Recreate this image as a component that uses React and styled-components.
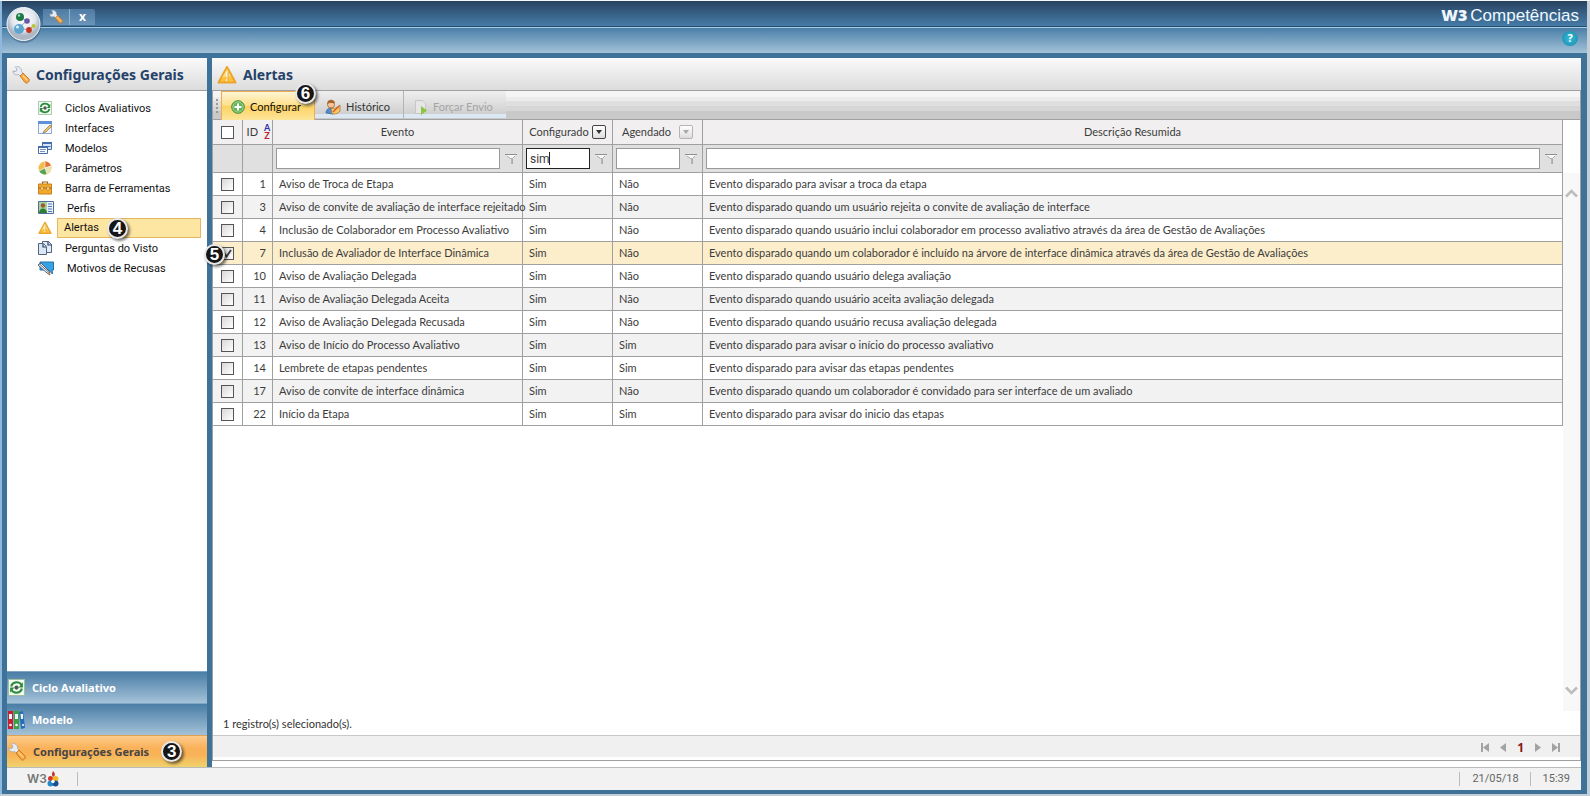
import React, { useState } from 'react';
import styled, { createGlobalStyle, css, ThemeProvider } from 'styled-components';

const theme = {
    font: {
        family: `Roboto, 'DejaVu Sans Condensed', sans-serif`,
        grid: `Lato, Roboto, sans-serif`,
        bold: `'Noto Sans', 'DejaVu Sans Condensed', sans-serif`,
        brand: `'Liberation Sans', Arial, sans-serif`
    },
    colors: {
        frame: '#3f7299',
        line: '#a0a0a0',
        title: '#24426a',
        text: '#4c4c4c'
    }
};

const GlobalStyle = createGlobalStyle`
    * {
        box-sizing: border-box;
    }

    body {
        margin: 0;
        background: #c3ced6;
        font-family: ${theme.font.family};
        font-size: 11px;
        line-height: 14px;
        color: ${theme.colors.text};
    }

    button,
    input {
        font: inherit;
        color: inherit;
        margin: 0;
        padding: 0;
    }

    svg {
        display: block;
        flex: none;
    }
`;

const Shell = styled.div`
    min-height: 100vh;
    display: flex;
    flex-direction: column;
    padding: 0 3px 2px 0;
    border-top: 1px solid #f4fafc;
`;

const Frame = styled.div`
    flex: 1;
    display: flex;
    flex-direction: column;
    background: ${({ theme }) => theme.colors.frame};
    border-left: 2px solid #8fb9dc;
`;

const TopBar = styled.header`
    position: relative;
    height: 26px;
    display: flex;
    justify-content: space-between;
    align-items: center;
    padding: 0 8px 0 41px;
    background: linear-gradient(#28425f, #3a668c 60%, #457aa5);
    border-bottom: 1px solid #24506f;
`;

const SubBar = styled.div`
    height: 26px;
    display: flex;
    justify-content: flex-end;
    align-items: center;
    padding: 0 9px;
    background: linear-gradient(#4a7fa8, #a3c2d8);
    border-top: 1px solid #a9cbe2;
`;

const Orb = styled.button`
    position: absolute;
    left: 4px;
    top: 5px;
    z-index: 2;
    border: 0;
    background: none;
`;

const Tab = styled.div`
    display: flex;
    align-items: center;
    height: 16px;
    margin-top: 6px;
    background: linear-gradient(#4f7ba3, #6b95ba);
    border-radius: 0 3px 0 0;
`;

const TabButton = styled.button`
    width: 26px;
    height: 16px;
    display: flex;
    align-items: center;
    justify-content: center;
    border: 0;
    background: none;
    color: #fff;
    font-family: ${({ theme }) => theme.font.bold};
    font-size: 12px;
    font-weight: bold;

    & + & {
        border-left: 1px solid #8fb2cf;
    }
`;

const Brand = styled.div`
    display: flex;
    align-items: baseline;
    gap: 3px;
    margin-top: 4px;
    font-family: ${({ theme }) => theme.font.brand};
    font-size: 17px;
    line-height: 20px;
    color: #f0f8ff;

    b {
        font-family: 'Open Sans', sans-serif;
        font-size: 16px;
        font-weight: 800;
    }
`;

const HelpButton = styled.button`
    width: 16px;
    height: 15px;
    margin-bottom: 5px;
    border: 0;
    border-radius: 50%;
    background: radial-gradient(#39bcd6, #1688ac);
    color: #fff;
    font-family: ${({ theme }) => theme.font.bold};
    font-weight: bold;
    line-height: 14px;
`;

const Body = styled.div`
    flex: 1;
    display: flex;
    gap: 5px;
    padding: 5px 6px 0 5px;
`;

const Sidebar = styled.aside`
    width: 200px;
    flex: none;
    display: flex;
    flex-direction: column;
    background: #fff;
`;

const PanelTitle = styled.h1`
    height: 33px;
    margin: 0;
    padding: 2px 5px 0;
    display: flex;
    align-items: center;
    gap: 6px;
    font-family: ${({ theme }) => theme.font.bold};
    font-size: 14px;
    line-height: 20px;
    color: ${({ theme }) => theme.colors.title};
    background: linear-gradient(#fafafa, #dcdcdc);
    border-bottom: 1px solid ${({ theme }) => theme.colors.line};
`;

const Menu = styled.nav`
    flex: 1;
    display: flex;
    flex-direction: column;
    padding: 7px 6px 0 31px;
`;

const MenuLink = styled.a`
    height: 20px;
    display: flex;
    align-items: center;
    gap: 5px;
    color: #111;
    text-decoration: none;
`;

const MenuLabel = styled.span`
    flex: 1;
    display: flex;
    align-items: center;
    gap: 8px;
    height: 20px;
    padding: 2px 0 0 7px;
    border: 1px solid transparent;
    ${({ $active }) =>
        $active &&
        css`
            padding: 0 0 0 6px;
            background: #fde5a2;
            border-color: #e2b862;
        `}
`;

const SectionButton = styled.button`
    height: 32px;
    display: flex;
    align-items: center;
    gap: 7px;
    padding: 0 1px;
    border: 0;
    border-top: 1px solid ${({ $active }) => ($active ? '#e0a050' : '#7fa6c4')};
    font-family: ${({ theme }) => theme.font.bold};
    font-weight: bold;
    color: ${({ $active }) => ($active ? '#454545' : '#fff')};
    background: ${({ $active }) =>
        $active ? 'linear-gradient(#fccb8c, #fab158 40%, #f9b256 60%, #efd26c)' : 'linear-gradient(#4a7da6, #a4c2d8)'};
`;

const SectionLabel = styled.span`
    display: flex;
    align-items: center;
    gap: 12px;
`;

const Main = styled.main`
    flex: 1;
    min-width: 0;
    display: flex;
    flex-direction: column;
    background: #fff;
    padding-bottom: 6px;
`;

const Panel = styled.section`
    flex: 1;
    display: flex;
    flex-direction: column;
    border: 1px solid ${({ theme }) => theme.colors.line};
    border-top: 0;
    padding-bottom: 3px;
`;

const Toolbar = styled.div`
    height: 29px;
    display: flex;
    padding-left: 3px;
    font-family: ${({ theme }) => theme.font.grid};
    background: linear-gradient(
        #f5f5f5 0 20%,
        #ececec 20% 36%,
        #dfdfdf 36% 54%,
        #d6d6d6 54% 72%,
        #c9c9c9 72%
    );
    border-bottom: 1px solid ${({ theme }) => theme.colors.line};
`;

const Grip = styled.span`
    width: 2px;
    margin: 8px 3px 4px 0;
    background: repeating-linear-gradient(#999 0 2px, transparent 2px 4px);
`;

const ToolGroup = styled.div`
    display: flex;
    height: 27px;
    background: linear-gradient(#efefef, #cfcfcf 86%, #dce9f5 86%);
`;

const ToolButton = styled.button`
    position: relative;
    display: flex;
    align-items: center;
    gap: 5px;
    height: 27px;
    padding: 4px 13px 0 10px;
    border: 0;
    border-right: 1px solid #b4b4b4;
    background: none;
    color: #333;

    &:last-child {
        border-right: 0;
    }

    &:disabled {
        color: #a5a5a5;
    }

    ${({ $active }) =>
        $active &&
        css`
            height: 31px;
            padding: 0 13px 0 9px;
            border: 1px solid #eeaa55;
            color: #111;
            background: linear-gradient(#fff6d5, #fee08c 45%, #fdd262 50%, #fde79f);
        `}
`;

const Badge = styled.span`
    flex: none;
    width: 21px;
    height: 21px;
    border: 2px solid #e8e8e8;
    border-radius: 50%;
    background: #161616;
    color: #fff;
    box-shadow: 2px 2px 3px rgba(0, 0, 0, 0.55);
    font-family: ${({ theme }) => theme.font.brand};
    font-size: 17px;
    font-weight: bold;
    line-height: 18px;
    text-align: center;
`;

const FloatingBadge = styled(Badge)`
    position: absolute;
    z-index: 3;
    left: ${({ $left }) => $left};
    top: ${({ $top }) => $top};
`;

const GridArea = styled.div`
    flex: 1;
    display: flex;
    align-items: stretch;
`;

const Grid = styled.table`
    flex: 1;
    align-self: flex-start;
    table-layout: fixed;
    width: 100%;
    border-spacing: 0;
    font-family: ${({ theme }) => theme.font.grid};
    color: #3c3c3c;
`;

const HeadCell = styled.th`
    position: relative;
    height: 25px;
    padding: 0 2px;
    font-weight: normal;
    white-space: nowrap;
    overflow: hidden;
    background: #f1efef;
    border: 0 solid ${({ theme }) => theme.colors.line};
    border-width: 0 1px 1px 0;
`;

const HeadContent = styled.div`
    display: flex;
    align-items: center;
    justify-content: ${({ $align = 'center' }) => $align};
    gap: ${({ $gap = 3 }) => $gap}px;
`;

const SortMark = styled.span`
    display: flex;
    flex-direction: column;
    width: 6px;
    font-size: 9px;
    font-weight: bold;
    line-height: 8px;
    color: #c0202e;

    span {
        color: #2b2ba8;
    }
`;

const DropButton = styled.button`
    width: 14px;
    height: 14px;
    display: flex;
    align-items: center;
    justify-content: center;
    border: 1px solid ${({ $on }) => ($on ? '#444' : '#b5b5b5')};
    border-radius: 2px;
    background: linear-gradient(#fff, #ddd);
    color: ${({ $on }) => ($on ? '#333' : '#a8a8a8')};
`;

const FilterCell = styled.td`
    height: 28px;
    padding: 0 0 0 3px;
    background: #e0e0e0;
    border: 0 solid ${({ theme }) => theme.colors.line};
    border-width: 0 1px 1px 0;
`;

const FilterBox = styled.div`
    display: flex;
    align-items: center;
`;

const FilterInput = styled.input`
    flex: 1;
    min-width: 0;
    height: 21px;
    padding: 0 3px;
    font-family: ${({ theme }) => theme.font.family};
    font-size: 12px;
    border: 1px solid ${({ $focus }) => ($focus ? '#222' : '#999')};
    background: #fff;
    outline: 0;
`;

const FilterButton = styled.button`
    width: 22px;
    height: 21px;
    display: flex;
    align-items: center;
    justify-content: center;
    border: 0;
    background: none;
`;

const Caret = styled.span`
    position: absolute;
    left: 23px;
    top: 4px;
    width: 1px;
    height: 13px;
    background: #222;
`;

const InputWrap = styled.div`
    position: relative;
    flex: 1;
    min-width: 0;
    display: flex;
`;

const Row = styled.tr`
    background: ${({ $selected }) => ($selected ? '#fdeecb' : '#fff')};

    &:nth-child(even) {
        background: ${({ $selected }) => ($selected ? '#fdeecb' : '#f2f2f2')};
    }
`;

const Cell = styled.td`
    height: 23px;
    padding: 0 0 0 6px;
    white-space: nowrap;
    border: 0 solid ${({ theme }) => theme.colors.line};
    border-width: 0 1px 1px 0;
`;

const NumberCell = styled(Cell)`
    padding: 0 6px 0 0;
    text-align: right;
`;

const CheckHolder = styled.label`
    position: relative;
    display: flex;
    padding-left: 2px;
`;

const Checkbox = styled.input`
    appearance: none;
    width: 13px;
    height: 13px;
    border: 1px solid #555;
    background: linear-gradient(135deg, #d8d8d8, #fff);

    &:checked + svg {
        display: block;
    }
`;

const HeadCheckbox = styled(Checkbox)`
    display: block;
    margin: 0 auto;
    background: #fff;
`;

const CheckMark = styled.svg`
    display: none;
    position: absolute;
    left: 4px;
    top: 2px;
    pointer-events: none;
`;

const ScrollBar = styled.div`
    width: 17px;
    flex: none;
    display: flex;
    flex-direction: column;
    justify-content: space-between;
    align-items: center;
    margin-top: 53px;
    padding: 16px 0;
    background: #f8f8f8;
`;

const ScrollButton = styled.button`
    border: 0;
    background: none;
`;

const Summary = styled.div`
    height: 24px;
    padding: 6px 10px;
    font-family: ${({ theme }) => theme.font.grid};
    color: #333;
`;

const Pager = styled.div`
    height: 22px;
    display: flex;
    justify-content: flex-end;
    align-items: center;
    gap: 10px;
    padding: 2px 20px 0 0;
    background: #f0f0f0;
    border-top: 1px solid #c8c8c8;

    b {
        color: #8c1713;
        font-family: ${({ theme }) => theme.font.bold};
        font-size: 12px;
    }
`;

const PagerButton = styled.button`
    border: 0;
    background: none;
`;

const StatusBar = styled.footer`
    height: 23px;
    display: flex;
    align-items: center;
    justify-content: space-between;
    margin: 0 6px 4px 5px;
    padding: 0 11px 0 20px;
    background: #f2f2f2;
    border-top: 1px solid #bbb;
    color: #666;
`;

const StatusLogo = styled.div`
    display: flex;
    align-items: center;
    height: 14px;
    width: 51px;
    border-right: 1px solid #bbb;
    font-family: Inter, sans-serif;
    font-size: 12px;
    font-weight: 600;
    color: #777;
`;

const StatusInfo = styled.div`
    display: flex;

    span {
        padding-left: 12px;
        border-left: 1px solid #bbb;
    }

    span + span {
        margin-left: 11px;
    }
`;

const Wrench = ({ size = 18 }) => (
    <svg width={size} height={size} viewBox="0 0 18 18">
        <path d="M3 .5 5 3 4 5.500 1 5C.5 8 4 9.500 6.500 8.500l2.500 2 2.500-2.500-2-2.500C10 2.500 7 .2 4.500.500" fill="#e9ecf2" stroke="#9aa6b5" strokeWidth=".8" />
        <path d="m8 10 3-3 6 6c1.500 2-2 5.500-4 3.500z" fill="#f6a640" stroke="#c06d1c" strokeWidth=".8" />
        <path d="m10.500 9.500 5 5" stroke="#ffd28c" strokeWidth="1.200" />
    </svg>
);

const Warning = ({ size = 20 }) => (
    <svg width={size} height={size} viewBox="0 0 20 20">
        <path d="M10 2 1.500 17.500h17z" fill="#fdc13e" stroke="#e9a52c" strokeWidth="2" strokeLinejoin="round" />
        <path d="M10 4 5 13c3-2 7-2 9-1z" fill="#fee08a" />
        <path d="M10 7v5.500M10 14v2" stroke="#fff6dc" strokeWidth="1.800" />
        <path d="M11 7v5.500M11 14v2" stroke="#cb8212" strokeWidth=".6" />
    </svg>
);

const Cycle = ({ size = 14 }) => (
    <svg width={size} height={size} viewBox="0 0 16 16">
        <path d="M.5.500h15v15H.500z" fill="#f4faf4" stroke="#9dbf9f" />
        <path d="M3 7c1-5 8-5 10-1M13 9c-1 5-8 5-10 1" fill="none" stroke="#2f8c3c" strokeWidth="2" />
        <path d="M14 3v5h-4zM2 13V8h4z" fill="#2f8c3c" />
        <circle cx="8" cy="8" r="2" fill="#4b5b4e" />
    </svg>
);

const FormEdit = () => (
    <svg width="14" height="14" viewBox="0 0 14 14">
        <path d="M.5.500h13v12H.500z" fill="#f2f7fe" stroke="#8aa9d8" />
        <path d="M0 0h14v3H0z" fill="#5f91d6" />
        <path d="m6 10 6-6 2 1-6 6-3 1z" fill="#f2c25b" stroke="#776143" strokeWidth=".6" />
    </svg>
);

const Windows = () => (
    <svg width="14" height="14" viewBox="0 0 14 14">
        <path d="M4.500 1.500h9v7h-9z" fill="#d6e4f8" stroke="#456eac" />
        <path d="M4 1h10v2H4z" fill="#456eac" />
        <path d="M9.500 5.500h3" stroke="#456eac" />
        <path d="M.5 5.500h9v7h-9z" fill="#fff" stroke="#456eac" />
        <path d="M0 5h10v2H0z" fill="#456eac" />
        <path d="M2 8.500h6M2 10.500h5" stroke="#7c94bd" />
    </svg>
);

const Pie = () => (
    <svg width="14" height="14" viewBox="0 0 14 14">
        <circle cx="7" cy="7" r="6.500" fill="#f3bd4a" />
        <path d="M7 7V.500A6.500 6.500 0 0 1 13 5z" fill="#e4703a" />
        <path d="M7 7 13 5a6.500 6.500 0 0 1-4 8z" fill="#e8e3b4" />
        <path d="m7 7 2 6a6.500 6.500 0 0 1-8-3z" fill="#57a350" />
        <path d="M7 7V1M7 7l6-2M7 7l2 6M7 7l-6 3" stroke="#fff" strokeWidth=".7" />
    </svg>
);

const Toolbox = () => (
    <svg width="14" height="14" viewBox="0 0 14 14">
        <path d="M4.500 3V1h5v2" fill="none" stroke="#98671a" strokeWidth="1.200" />
        <path d="M.5 3h13v10H.500z" fill="#f2aa2c" stroke="#c8811b" />
        <path d="M0 7h14" stroke="#a96a14" />
        <path d="M3 6h2v3H3zM9 6h2v3H9z" fill="#fff2cc" stroke="#a96a14" strokeWidth=".5" />
    </svg>
);

const Profile = () => (
    <svg width="16" height="14" viewBox="0 0 16 14">
        <path d="M.5.500h15v12H.500z" fill="#e9f1fb" stroke="#4d6d9b" />
        <path d="M1 1h8v11H1z" fill="#a8cf9d" />
        <circle cx="5" cy="4.500" r="2.200" fill="#9a5a2a" />
        <path d="M1 12c0-6 8-6 8 0z" fill="#2d7d35" />
        <path d="M10 3h4M10 5.500h4M10 8h4M10 10.500h4" stroke="#5076ad" />
    </svg>
);

const Pages = () => (
    <svg width="14" height="14" viewBox="0 0 14 14">
        <path d="M4.500.500h6l3 3v8h-9z" fill="#e4edf8" stroke="#53647e" />
        <path d="M10 .5V4h4" fill="none" stroke="#2d4568" strokeWidth="1.200" />
        <path d="M.5 2.500h5l3 3v8h-8z" fill="#dbe7f5" stroke="#53647e" />
        <path d="M5 3v3h3" fill="none" stroke="#2d4568" strokeWidth="1.200" />
    </svg>
);

const Refusal = () => (
    <svg width="16" height="15" viewBox="0 0 16 15">
        <path d="M2 1h13.500v8H14l.5 4-4-4H2z" fill="#37a2e3" stroke="#1e73ad" />
        <path d="m0 4 9 8 3 2-1-4-8-8z" fill="#f5f8fa" stroke="#425365" strokeWidth=".9" />
        <path d="m1.500 3 9 8" stroke="#425365" strokeWidth=".9" />
        <path d="m9 12 3 2-1-3.500z" fill="#d58a50" />
    </svg>
);

const Binders = () => (
    <svg width="17" height="20" viewBox="0 0 17 20">
        <path d="M0 1h5v18H0z" fill="#c9202b" />
        <path d="M6 1h5v18H6z" fill="#38a345" />
        <path d="m11 2 4-1 2 17-4 1z" fill="#2a6db8" />
        <path d="M1 4h3v5H1zM7 4h3v5H7zM12.500 4h2.500v5h-2z" fill="#eef3f7" />
        <circle cx="2.500" cy="15" r="1.300" fill="#fff" />
        <circle cx="8.500" cy="15" r="1.300" fill="#fff" />
        <circle cx="15" cy="15" r="1" fill="#fff" />
    </svg>
);

const Plus = () => (
    <svg width="14" height="14" viewBox="0 0 14 14">
        <circle cx="7" cy="7" r="6.300" fill="#67b457" stroke="#3f8c3a" />
        <circle cx="7" cy="7" r="5.200" fill="none" stroke="#b7e0a8" strokeWidth=".7" />
        <path d="M7 3.500v7M3.500 7h7" stroke="#fff" strokeWidth="2" />
    </svg>
);

const History = () => (
    <svg width="16" height="16" viewBox="0 0 16 16">
        <path d="M1 14c0-6 7-6 8-2l-1 3z" fill="#4d8fd0" stroke="#2c5f9c" strokeWidth=".7" />
        <circle cx="6" cy="5.500" r="3.500" fill="#f4c59a" stroke="#a36427" strokeWidth=".8" />
        <path d="M2 5c0-5 7-6 8-1-3 1-4-1-8 1z" fill="#a8642a" />
        <path d="M6 9c3 1 6 0 9-3v6c-2 3-5 3-8 3z" fill="#f6c766" stroke="#a9772c" strokeWidth=".8" />
        <path d="m8 13 6-6" stroke="#d95a28" strokeWidth="1.500" />
    </svg>
);

const SendPage = () => (
    <svg width="14" height="16" viewBox="0 0 14 16">
        <path d="M1.500 1.500h7l3 3v10h-10z" fill="#e6e6e6" stroke="#c6c6c6" />
        <path d="M7 7v9l6-4.500z" fill="#8cc63f" />
    </svg>
);

const Funnel = () => (
    <svg width="12" height="12" viewBox="0 0 12 12">
        <path d="M1 2h10L7 6v5L6 9V6z" fill="#fafafa" />
        <path d="M0 1.500h12" stroke="#8e8e8e" />
        <path d="M2 3 5.500 5.500h2L10 3" fill="none" stroke="#a7a7a7" />
        <path d="M7 6v5" stroke="#777" />
    </svg>
);

const OrbIcon = () => (
    <svg width="36" height="38" viewBox="0 0 36 38">
        <defs>
            <radialGradient id="orb" cx="50%" cy="35%">
                <stop offset="0" stopColor="#fff" />
                <stop offset=".7" stopColor="#e3e7ed" />
                <stop offset="1" stopColor="#adb7c4" />
            </radialGradient>
        </defs>
        <circle cx="18" cy="20" r="17" fill="#1e3f5e" opacity=".35" />
        <circle cx="17.500" cy="18" r="16.500" fill="url(#orb)" stroke="#f5f7fa" />
        <path d="m14 11 7 4-9 7 11 2 5-5" fill="none" stroke="#9babb9" />
        <circle cx="14" cy="11" r="4" fill="#1d7a47" />
        <circle cx="21" cy="15" r="2.800" fill="#6a57a8" />
        <circle cx="13" cy="23" r="5" fill="#5ca5cf" />
        <circle cx="23" cy="24" r="2.900" fill="#c53620" />
        <circle cx="27.500" cy="20" r="2" fill="#b9c530" />
        <circle cx="13" cy="9.500" r="1.200" fill="#a9d8bb" />
        <circle cx="11.500" cy="21" r="1.600" fill="#d7edf7" />
    </svg>
);

const W3Mark = () => (
    <svg width="12" height="17" viewBox="0 0 12 17">
        <path d="M6 0c3 3 2 5 0 6-2-2-1-4 0-6z" fill="#c23a2c" />
        <circle cx="3.500" cy="7.500" r="2.500" fill="#d7342c" />
        <circle cx="8.500" cy="8" r="3" fill="#f0b828" />
        <circle cx="3.500" cy="12.500" r="3" fill="#2789c8" />
        <circle cx="8.500" cy="12.500" r="3" fill="#164f92" />
        <circle cx="6" cy="10.500" r="1.700" fill="#fff" />
    </svg>
);

const Chevron = ({ up }) => (
    <svg width="13" height="9" viewBox="0 0 13 9">
        <path d={up ? 'm1 7.500 5.500-5.500L12 7.500' : 'm1 1.500 5.500 5.500L12 1.500'} fill="none" stroke="#bdbdbd" strokeWidth="2.600" />
    </svg>
);

const pagerPaths = {
    first: 'M0 0h2v9H0zM8 0v9L2 4.500z',
    prev: 'M7 0v9L1 4.500z',
    next: 'M1 0v9l6-4.500z',
    last: 'M0 0v9l6-4.500zM6 0h2v9H6z'
};

const PageControl = ({ kind, label }) => (
    <PagerButton aria-label={label}>
        <svg width="8" height="9" viewBox="0 0 8 9">
            <path d={pagerPaths[kind]} fill="#a3a3a3" />
        </svg>
    </PagerButton>
);

const menuItems = [
    { label: 'Ciclos Avaliativos', icon: <Cycle /> },
    { label: 'Interfaces', icon: <FormEdit /> },
    { label: 'Modelos', icon: <Windows /> },
    { label: 'Parâmetros', icon: <Pie /> },
    { label: 'Barra de Ferramentas', icon: <Toolbox /> },
    { label: 'Perfis', icon: <Profile /> },
    { label: 'Alertas', icon: <Warning size={14} />, active: true, badge: 4 },
    { label: 'Perguntas do Visto', icon: <Pages /> },
    { label: 'Motivos de Recusas', icon: <Refusal /> }
];

const alerts = [
    [1, 'Aviso de Troca de Etapa', 'Não', 'Evento disparado para avisar a troca da etapa'],
    [3, 'Aviso de convite de avaliação de interface rejeitado', 'Não', 'Evento disparado quando um usuário rejeita o convite de avaliação de interface'],
    [4, 'Inclusão de Colaborador em Processo Avaliativo', 'Não', 'Evento disparado quando usuário inclui colaborador em processo avaliativo através da área de Gestão de Avaliações'],
    [7, 'Inclusão de Avaliador de Interface Dinâmica', 'Não', 'Evento disparado quando um colaborador é incluído na árvore de interface dinâmica através da área de Gestão de Avaliações'],
    [10, 'Aviso de Avaliação Delegada', 'Não', 'Evento disparado quando usuário delega avaliação'],
    [11, 'Aviso de Avaliação Delegada Aceita', 'Não', 'Evento disparado quando usuário aceita avaliação delegada'],
    [12, 'Aviso de Avaliação Delegada Recusada', 'Não', 'Evento disparado quando usuário recusa avaliação delegada'],
    [13, 'Aviso de Início do Processo Avaliativo', 'Sim', 'Evento disparado para avisar o início do processo avaliativo'],
    [14, 'Lembrete de etapas pendentes', 'Sim', 'Evento disparado para avisar das etapas pendentes'],
    [17, 'Aviso de convite de interface dinâmica', 'Não', 'Evento disparado quando um colaborador é convidado para ser interface de um avaliado'],
    [22, 'Início da Etapa', 'Sim', 'Evento disparado para avisar do inicio das etapas']
];

const Filter = ({ label, value = '', focus }) => {
    const [text, setText] = useState(value);
    return (
        <FilterBox>
            <InputWrap>
                <FilterInput aria-label={label} value={text} $focus={focus} onChange={e => setText(e.target.value)} />
                {focus && <Caret />}
            </InputWrap>
            <FilterButton aria-label={`Filtrar ${label}`}>
                <Funnel />
            </FilterButton>
        </FilterBox>
    );
};

const Drop = ({ on, label }) => (
    <DropButton $on={on} aria-label={label}>
        <svg width="6" height="4" viewBox="0 0 6 4">
            <path d="M0 0h6L3 4z" fill="currentColor" />
        </svg>
    </DropButton>
);

const AlertsGrid = () => (
    <Grid>
        <colgroup>
            <col width="30" />
            <col width="30" />
            <col width="250" />
            <col width="90" />
            <col width="90" />
            <col />
        </colgroup>
        <thead>
            <tr>
                <HeadCell>
                    <HeadCheckbox type="checkbox" aria-label="Selecionar todos" />
                </HeadCell>
                <HeadCell>
                    <HeadContent $gap={6} $align="flex-end">
                        ID
                        <SortMark>
                            <span>A</span>Z
                        </SortMark>
                    </HeadContent>
                </HeadCell>
                <HeadCell>Evento</HeadCell>
                <HeadCell>
                    <HeadContent>
                        Configurado <Drop on label="Opções de Configurado" />
                    </HeadContent>
                </HeadCell>
                <HeadCell>
                    <HeadContent $gap={8}>
                        Agendado <Drop label="Opções de Agendado" />
                    </HeadContent>
                </HeadCell>
                <HeadCell>Descrição Resumida</HeadCell>
            </tr>
            <tr>
                <FilterCell />
                <FilterCell />
                <FilterCell>
                    <Filter label="Evento" />
                </FilterCell>
                <FilterCell>
                    <Filter label="Configurado" value="sim" focus />
                </FilterCell>
                <FilterCell>
                    <Filter label="Agendado" />
                </FilterCell>
                <FilterCell>
                    <Filter label="Descrição Resumida" />
                </FilterCell>
            </tr>
        </thead>
        <tbody>
            {alerts.map(([id, event, scheduled, description]) => (
                <Row key={id} $selected={id === 7}>
                    <Cell>
                        <CheckHolder>
                            <Checkbox type="checkbox" defaultChecked={id === 7} aria-label={`Selecionar ${event}`} />
                            <CheckMark width="9" height="9" viewBox="0 0 9 9">
                                <path d="m1 4 2.500 3.500L8 1" fill="none" stroke="#444" strokeWidth="2" />
                            </CheckMark>
                            {id === 7 && (
                                <FloatingBadge $left="-15px" $top="-3px">
                                    5
                                </FloatingBadge>
                            )}
                        </CheckHolder>
                    </Cell>
                    <NumberCell>{id}</NumberCell>
                    <Cell>{event}</Cell>
                    <Cell>Sim</Cell>
                    <Cell>{scheduled}</Cell>
                    <Cell>{description}</Cell>
                </Row>
            ))}
        </tbody>
    </Grid>
);

const App = () => (
    <ThemeProvider theme={theme}>
        <GlobalStyle />
        <Shell>
            <Frame>
                <TopBar>
                    <Orb aria-label="Menu principal">
                        <OrbIcon />
                    </Orb>
                    <Tab>
                        <TabButton aria-label="Configurações">
                            <Wrench size={14} />
                        </TabButton>
                        <TabButton aria-label="Fechar">x</TabButton>
                    </Tab>
                    <Brand>
                        <b>W3</b>
                        <span>Competências</span>
                    </Brand>
                </TopBar>
                <SubBar>
                    <HelpButton>?</HelpButton>
                </SubBar>
                <Body>
                    <Sidebar>
                        <PanelTitle>
                            <Wrench />
                            Configurações Gerais
                        </PanelTitle>
                        <Menu>
                            {menuItems.map(({ label, icon, active, badge }) => (
                                <MenuLink href="#" key={label}>
                                    {icon}
                                    <MenuLabel $active={active}>
                                        {label}
                                        {badge && <Badge>{badge}</Badge>}
                                    </MenuLabel>
                                </MenuLink>
                            ))}
                        </Menu>
                        <SectionButton>
                            <Cycle size={17} />
                            Ciclo Avaliativo
                        </SectionButton>
                        <SectionButton>
                            <Binders />
                            Modelo
                        </SectionButton>
                        <SectionButton $active>
                            <Wrench />
                            <SectionLabel>
                                Configurações Gerais
                                <Badge>3</Badge>
                            </SectionLabel>
                        </SectionButton>
                    </Sidebar>
                    <Main>
                        <PanelTitle>
                            <Warning />
                            Alertas
                        </PanelTitle>
                        <Panel>
                            <Toolbar>
                                <Grip />
                                <ToolGroup>
                                    <ToolButton $active>
                                        <Plus />
                                        Configurar
                                        <FloatingBadge $left="73px" $top="-9px">
                                            6
                                        </FloatingBadge>
                                    </ToolButton>
                                    <ToolButton>
                                        <History />
                                        Histórico
                                    </ToolButton>
                                    <ToolButton disabled>
                                        <SendPage />
                                        Forçar Envio
                                    </ToolButton>
                                </ToolGroup>
                            </Toolbar>
                            <GridArea>
                                <AlertsGrid />
                                <ScrollBar>
                                    <ScrollButton aria-label="Rolar para cima">
                                        <Chevron up />
                                    </ScrollButton>
                                    <ScrollButton aria-label="Rolar para baixo">
                                        <Chevron />
                                    </ScrollButton>
                                </ScrollBar>
                            </GridArea>
                            <Summary>1 registro(s) selecionado(s).</Summary>
                            <Pager>
                                <PageControl kind="first" label="Primeira página" />
                                <PageControl kind="prev" label="Página anterior" />
                                <b>1</b>
                                <PageControl kind="next" label="Próxima página" />
                                <PageControl kind="last" label="Última página" />
                            </Pager>
                        </Panel>
                    </Main>
                </Body>
                <StatusBar>
                    <StatusLogo>
                        W3
                        <W3Mark />
                    </StatusLogo>
                    <StatusInfo>
                        <span>21/05/18</span>
                        <span>15:39</span>
                    </StatusInfo>
                </StatusBar>
            </Frame>
        </Shell>
    </ThemeProvider>
);

export default App;
